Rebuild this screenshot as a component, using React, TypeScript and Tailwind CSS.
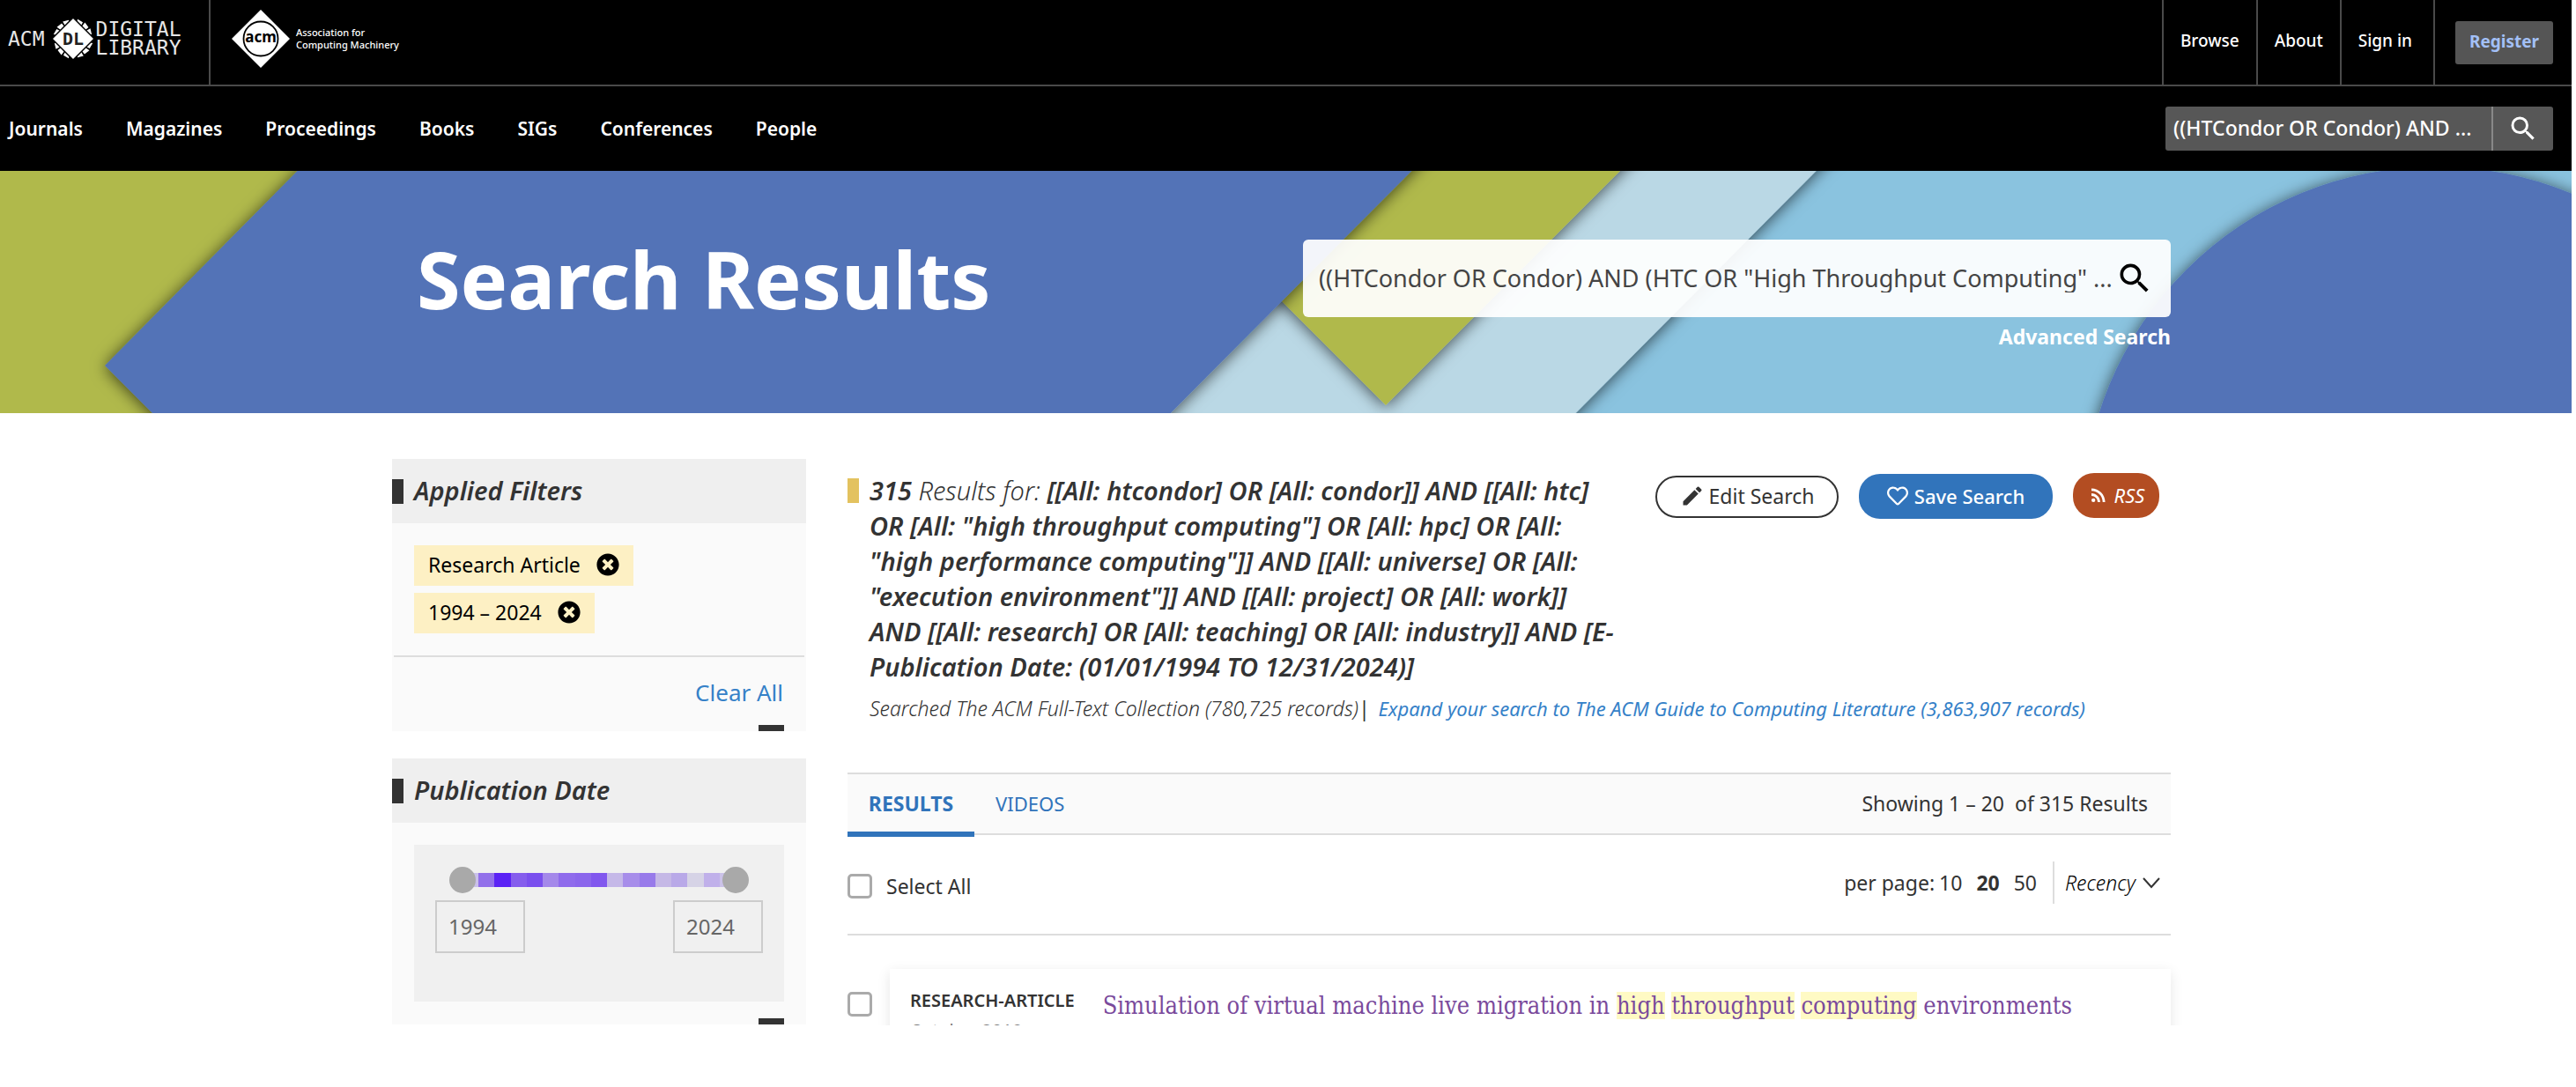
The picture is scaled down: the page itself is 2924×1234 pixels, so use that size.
import { useState } from "react";
import { MdSearch, MdEdit, MdRssFeed } from "react-icons/md";
import { FaRegHeart, FaTimesCircle } from "react-icons/fa";

const NAV = ["Journals", "Magazines", "Proceedings", "Books", "SIGs", "Conferences", "People"];

const SEGMENTS = [
  "#c9c0ea", "#9270ea", "#5b22f5", "#855ded", "#7a4fee", "#a488ea", "#8f6bec", "#8b66ec",
  "#8157ee", "#c5b8e8", "#a78dea", "#987aea", "#c5b8e6", "#b9a9e8", "#d6d3e6", "#c0b0ea", "#cbc2e8",
];

function DlEmblem() {
  return (
    <svg viewBox="-24 -24 48 48" className="size-12 shrink-0" aria-hidden="true">
      <g fill="#fff">
        {[22, 45, 68, 112, 135, 158, 202, 225, 248, 292, 315, 338].map((a) => (
          <path key={a} d="M-3.6 -22.5 L3.2 -21.5 L2.4 -14 L-2.4 -14 Z" transform={`rotate(${a})`} />
        ))}
      </g>
      <path d="M0 -24 L24 0 L0 24 L-24 0 Z" fill="#fff" stroke="#000" strokeWidth="1.5" />
      <text x="0" y="7" textAnchor="middle" fontSize="20" fontWeight="700" fill="#222" fontFamily="DejaVu Sans Mono, monospace">
        DL
      </text>
    </svg>
  );
}

function AcmEmblem() {
  return (
    <svg viewBox="-33 -33 66 66" className="size-[66px] shrink-0" aria-hidden="true">
      <path d="M0 -33 L33 0 L0 33 L-33 0 Z" fill="#fff" />
      <circle r="19.5" fill="none" stroke="#000" strokeWidth="1.8" />
      <text x="0" y="4" textAnchor="middle" fontSize="17" fontWeight="700" fill="#000" fontFamily="Noto Sans, sans-serif">
        acm
      </text>
    </svg>
  );
}

function HeroArt() {
  return (
    <svg
      viewBox="0 0 2919 276"
      preserveAspectRatio="xMidYMin slice"
      className="absolute inset-0 size-full"
      aria-hidden="true"
    >
      <defs>
        <filter id="shade" x="-10%" y="-20%" width="120%" height="140%">
          <feDropShadow dx="0" dy="2" stdDeviation="9" floodColor="#000" floodOpacity="0.65" />
        </filter>
      </defs>
      <rect width="2919" height="276" fill="#8ac3df" />
      <path d="M1200 -60 H2121 L1728 336 H1200 Z" fill="#bad8e5" filter="url(#shade)" />
      <path d="M1400 -60 H1899 L1573 266 L1396 89 Z" fill="#b0b94b" filter="url(#shade)" />
      <rect width="600" height="276" fill="#b0b94b" />
      <path d="M397 -60 H1662 L1268 336 H234 L119 221 Z" fill="#5273b7" filter="url(#shade)" />
      <circle cx="2765" cy="396" r="401" fill="#5273b7" filter="url(#shade)" />
    </svg>
  );
}

function PanelHeading({ children }: { children: string }) {
  return (
    <div className="flex h-[73px] items-center gap-3 bg-[#efefef]">
      <span className="h-7 w-[13px] bg-[#333]" />
      <h2 className="pb-[2px] text-[29px] leading-9 font-semibold italic">{children}</h2>
    </div>
  );
}

function Chip({ label }: { label: string }) {
  return (
    <li className="flex h-[46px] items-center gap-[18px] bg-[#fdf0c4] pr-4 pb-[2px] pl-4 text-black">
      {label}
      <button type="button" aria-label={`Remove ${label}`}>
        <FaTimesCircle className="size-[26px]" />
      </button>
    </li>
  );
}

const thumb =
  "pointer-events-none absolute inset-0 w-full appearance-none bg-transparent [&::-webkit-slider-thumb]:pointer-events-auto [&::-webkit-slider-thumb]:size-[30px] [&::-webkit-slider-thumb]:appearance-none [&::-webkit-slider-thumb]:rounded-full [&::-webkit-slider-thumb]:bg-[#a9a9a9]";
const checkbox = "size-7 shrink-0 appearance-none rounded-[5px] border-[3px] border-[#aaa] bg-white checked:bg-[#3174bb]";

export default function App() {
  const [from, setFrom] = useState(1994);
  const [to, setTo] = useState(2024);
  return (
    <div className="bg-white pr-[5px] font-['Noto_Sans',sans-serif] text-[23px] leading-8 text-[#333]">
      <header className="bg-black text-white">
        <div className="flex h-[98px] border-b-2 border-[#4a4a4a]">
          <a
            href="#"
            className="flex w-[239px] items-center border-r-2 border-[#4a4a4a] pb-2 pl-[9px] font-['DejaVu_Sans_Mono',monospace] text-[23px] text-[#e6e6e6]"
          >
            <span>ACM</span>
            <span className="ml-2 shrink-0">
              <DlEmblem />
            </span>
            <span className="ml-[2px] flex flex-col leading-[21px]">
              <span>DIGITAL</span>
              <span>LIBRARY</span>
            </span>
          </a>
          <a href="#" className="flex items-center gap-[7px] pb-2 pl-6 text-[11px] leading-[14px] font-medium">
            <AcmEmblem />
            <span>
              Association for
              <br />
              Computing Machinery
            </span>
          </a>
          <div className="ml-auto flex items-center text-[19px] font-medium">
            <a href="#" className="flex h-full items-center border-l-2 border-[#4a4a4a] px-[19px]">
              <span className="-mt-1">Browse</span>
            </a>
            <a href="#" className="flex h-full items-center border-l-2 border-[#4a4a4a] px-[19px]">
              <span className="-mt-1">About</span>
            </a>
            <a href="#" className="flex h-full items-center border-x-2 border-[#4a4a4a] pr-6 pl-[19px]">
              <span className="-mt-1">Sign in</span>
            </a>
            <button
              type="button"
              className="mr-[21px] ml-[23px] h-[49px] w-[111px] rounded-[3px] bg-[#555] pb-[2px] font-bold text-[#a3c0f7]"
            >
              Register
            </button>
          </div>
        </div>
        <div className="flex h-[96px] items-center justify-between pr-[21px] pl-[10px]">
          <nav className="flex gap-[49px] text-[21px] font-semibold">
            {NAV.map((n) => (
              <a href="#" key={n}>
                {n}
              </a>
            ))}
          </nav>
          <form className="flex h-[50px] w-[440px] overflow-hidden rounded-[3px] bg-[#575757]">
            <input
              aria-label="Quick search"
              defaultValue="((HTCondor OR Condor) AND ..."
              className="min-w-0 flex-1 pb-[2px] pl-[9px] text-[23px] font-medium"
            />
            <button type="button" aria-label="Search" className="flex w-[70px] items-center justify-center border-l-2 border-[#888]">
              <MdSearch className="size-9" />
            </button>
          </form>
        </div>
      </header>

      <section className="relative h-[275px] overflow-hidden pr-[10px]">
        <HeroArt />
        <div className="relative mx-auto flex w-full max-w-[2019px] items-start justify-between pl-7 text-white">
          <h1 className="pt-[58px] text-[90px] leading-[128px] font-bold">Search Results</h1>
          <div className="flex w-[985px] flex-col items-end gap-[6px] pt-[78px]">
            <form className="flex h-[88px] w-full items-center rounded-md bg-white/93 pr-[19px] pl-[18px] text-[#444]">
              <input
                aria-label="Search"
                defaultValue={'((HTCondor OR Condor) AND (HTC OR "High Throughput Computing" ...'}
                className="min-w-0 flex-1 text-[27px]"
              />
              <button type="button" aria-label="Submit search" className="text-black">
                <MdSearch className="size-11" />
              </button>
            </form>
            <a href="#" className="font-bold">
              Advanced Search
            </a>
          </div>
        </div>
      </section>

      <div className="pr-[10px]">
        <div className="mx-auto flex w-full max-w-[2019px] items-start gap-[47px] pt-[52px]">
          <aside className="flex w-[470px] shrink-0 flex-col gap-[31px]">
            <section className="bg-[#fafafa]">
              <PanelHeading>Applied Filters</PanelHeading>
              <ul className="flex flex-col items-start gap-2 px-[25px] py-[25px]">
                <Chip label="Research Article" />
                <Chip label="1994 – 2024" />
              </ul>
              <div className="mx-[2px] flex justify-end border-t-2 border-[#ddd] px-6 pt-6 pb-[21px]">
                <a href="#" className="text-[26px] text-[#3581c8]">
                  Clear All
                </a>
              </div>
              <div className="mr-[25px] ml-auto h-[7px] w-[29px] bg-[#333]" />
            </section>

            <section className="bg-[#fafafa]">
              <PanelHeading>Publication Date</PanelHeading>
              <div className="px-[25px] pt-[25px] pb-[19px]">
                <div className="h-[178px] bg-[#f0f0f0] pt-6">
                  <div className="relative mx-10 flex h-8 items-center px-[15px]">
                    <div className="flex h-4 flex-1">
                      {SEGMENTS.map((c, i) => (
                        <span key={i} className="flex-1" style={{ backgroundColor: c }} />
                      ))}
                    </div>
                    <input type="range" aria-label="Start year" min={1994} max={2024} value={from} onChange={(e) => setFrom(+e.target.value)} className={thumb} />
                    <input type="range" aria-label="End year" min={1994} max={2024} value={to} onChange={(e) => setTo(+e.target.value)} className={thumb} />
                  </div>
                  <div className="flex justify-between px-6 pt-[7px] text-[24px] text-[#666]">
                    <input aria-label="From" value={from} readOnly className="h-[60px] w-[102px] border-2 border-[#ccc] pb-[2px] pl-[13px]" />
                    <input aria-label="To" value={to} readOnly className="h-[60px] w-[102px] border-2 border-[#ccc] pb-[2px] pl-[13px]" />
                  </div>
                </div>
              </div>
              <div className="mr-[25px] ml-auto h-[7px] w-[29px] bg-[#333]" />
            </section>
          </aside>

          <main className="min-w-0 flex-1">
            <div className="flex items-start justify-between pt-4 pr-[13px]">
              <div className="flex gap-3">
                <span className="mt-[6px] h-7 w-[13px] shrink-0 bg-[#e3c25f]" />
                <p className="w-[880px] text-[29px] leading-10 font-semibold italic">
                  315 <span className="font-light">Results for:</span> [[All: htcondor] OR [All: condor]] AND [[All: htc]
                  <br />
                  OR [All: "high throughput computing"] OR [All: hpc] OR [All:
                  <br />
                  "high performance computing"]] AND [[All: universe] OR [All:
                  <br />
                  "execution environment"]] AND [[All: project] OR [All: work]]
                  <br />
                  AND [[All: research] OR [All: teaching] OR [All: industry]] AND [E-
                  <br />
                  Publication Date: (01/01/1994 TO 12/31/2024)]
                </p>
              </div>
              <div className="flex gap-[23px]">
                <button type="button" className="mt-[3px] flex h-12 w-[208px] items-center justify-center gap-[5px] rounded-3xl border-2 border-[#333] pb-[2px]">
                  <MdEdit className="size-7" />
                  Edit Search
                </button>
                <button type="button" className="mt-px flex h-[51px] w-[220px] items-center justify-center gap-[7px] rounded-3xl bg-[#3174bb] pb-[2px] text-[22px] font-medium text-white">
                  <FaRegHeart className="size-6" />
                  Save Search
                </button>
                <button type="button" className="flex h-[51px] w-[98px] items-center justify-center gap-[6px] rounded-3xl bg-[#b34d22] pb-[2px] text-[22px] text-white italic">
                  <MdRssFeed className="size-6" />
                  RSS
                </button>
              </div>
            </div>
            <p className="mt-[11px] pl-[25px] italic">
              <span className="font-light">Searched The ACM Full-Text Collection (780,725 records)</span>|{" "}
              <a href="#" className="ml-1 text-[22px] text-[#3581c8]">
                Expand your search to The ACM Guide to Computing Literature (3,863,907 records)
              </a>
            </p>

            <div className="mt-[57px] flex h-[71px] items-stretch justify-between border-y-2 border-[#ddd] bg-[#fafafa]">
              <div className="flex text-[#3174bb]">
                <button type="button" className="-mb-1 w-36 border-b-[6px] border-[#3174bb] font-bold">
                  RESULTS
                </button>
                <button type="button" className="px-6 pb-[2px] text-[22px]">
                  VIDEOS
                </button>
              </div>
              <p className="self-center pr-[26px] pb-[2px] whitespace-pre">Showing 1 – 20  of 315 Results</p>
            </div>

            <div className="flex h-[114px] items-center justify-between border-b-2 border-[#ddd]">
              <label className="flex items-center gap-4 pt-1">
                <input type="checkbox" className={checkbox} />
                Select All
              </label>
              <div className="flex items-center pr-3 pb-1">
                <span>per page:</span>
                <a href="#" className="ml-[5px]">
                  10
                </a>
                <a href="#" className="ml-4 font-bold">
                  20
                </a>
                <a href="#" className="ml-4">
                  50
                </a>
                <div className="relative ml-[18px] flex h-12 items-center border-l-2 border-[#ddd] pl-3">
                  <select aria-label="Sort by" className="w-[108px] appearance-none font-light text-black italic">
                    <option>Recency</option>
                  </select>
                  <svg viewBox="0 0 20 13" className="pointer-events-none absolute right-0 w-5" fill="none" stroke="#333" strokeWidth="2" aria-hidden="true">
                    <path d="M1 1 L10 11 L19 1" />
                  </svg>
                </div>
              </div>
            </div>

            <div className="-mr-6 flex h-[102px] gap-5 overflow-hidden pt-[38px] pr-6">
              <input type="checkbox" aria-label="Select this result" className={`${checkbox} mt-[26px]`} />
              <article className="flex h-40 flex-1 gap-[32px] pt-5 pl-[23px] shadow-[0_4px_14px_rgba(0,0,0,0.1)]">
                <div>
                  <p className="text-[20px] font-semibold">RESEARCH-ARTICLE</p>
                  <p className="mt-[2px] text-[20px] text-[#777]">October 2018</p>
                </div>
                <h3 className="pt-[6px] font-['DejaVu_Serif_Condensed','DejaVu_Serif',serif] text-[27px] text-[#7a4a9c]">
                  <a href="#">
                    Simulation of virtual machine live migration in <mark className="bg-[#fffac4] text-inherit">high</mark>{" "}
                    <mark className="bg-[#fffac4] text-inherit">throughput</mark>{" "}
                    <mark className="bg-[#fffac4] text-inherit">computing</mark> environments
                  </a>
                </h3>
              </article>
            </div>
          </main>
        </div>
      </div>
    </div>
  );
}
